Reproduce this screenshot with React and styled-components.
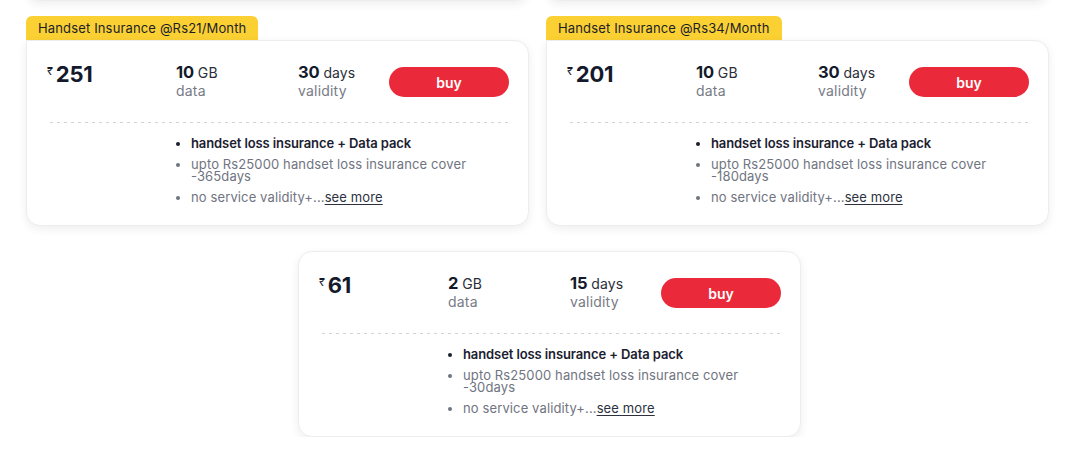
import React from "react";
import styled, { createGlobalStyle } from "styled-components";

const Global = createGlobalStyle`
  * { box-sizing: border-box; }
  html, body { margin: 0; padding: 0; background: #ffffff; overflow: hidden; }
  body { font-family: Inter, "Noto Sans", "Liberation Sans", sans-serif; color: #141a2b; }
`;

const Page = styled.div`
  width: 1069px;
  padding-left: 26px;
  margin-top: -184px;
`;

const Grid = styled.div`
  display: grid;
  grid-template-columns: 503px 503px;
  column-gap: 17px;
  row-gap: 15px;
`;

const ThirdRow = styled.div`
  display: flex;
  padding-left: 272px;
  margin-top: 25px;
`;

const Item = styled.div`
  display: flex;
  flex-direction: column;
  align-items: flex-start;
  width: 503px;
`;

const Badge = styled.div`
  height: 24px;
  padding: 0 12px;
  display: flex;
  align-items: center;
  background: #fbd033;
  border-radius: 6px 6px 0 0;
  font-size: 13px;
  color: #1b1f2a;
  letter-spacing: 0.15px;
`;

const Card = styled.div`
  width: 503px;
  background: #fff;
  border: 1px solid #ededed;
  border-radius: ${(p) => (p.$flat ? "0 14px 14px 14px" : "14px")};
  box-shadow: 0 3px 10px rgba(0, 0, 0, 0.07);
  padding: 22px 19px 22px 20px;
  height: ${(p) => (p.$h ? p.$h + "px" : "auto")};
`;

const Top = styled.div`
  display: grid;
  grid-template-columns: 129px 122px 1fr 120px;
  align-items: start;
`;

const Price = styled.div`
  display: flex;
  align-items: flex-start;
  height: 22px;
  font-size: 22px;
  line-height: 22px;
  font-weight: 700;
  color: #141a2b;
  letter-spacing: -0.2px;
`;

const Rupee = styled.span`
  font-size: 11px;
  line-height: 14px;
  font-weight: 400;
  margin-right: 3px;
  margin-top: 1px;
`;

const Stat = styled.div`
  display: flex;
  flex-direction: column;
`;

const Value = styled.div`
  height: 18px;
  font-size: 16.5px;
  line-height: 18px;
  font-weight: 700;
  color: #141a2b;
  letter-spacing: -0.2px;
`;

const Unit = styled.span`
  font-size: 14px;
  line-height: 1;
  font-weight: 400;
  color: #2a2f3a;
  margin-left: 4px;
  letter-spacing: 0.1px;
`;

const Label = styled.div`
  height: 18px;
  margin-top: 1px;
  font-size: 14px;
  line-height: 18px;
  color: #777b86;
  letter-spacing: 0.2px;
`;

const Buy = styled.button`
  margin-top: 4px;
  height: 30px;
  width: 120px;
  border: none;
  border-radius: 15px;
  background: #ea2a3b;
  color: #fff;
  font-family: inherit;
  font-size: 14px;
  font-weight: 600;
  cursor: pointer;
`;

const Divider = styled.div`
  margin: 22px 0 0 3px;
  height: 1px;
  background-image: linear-gradient(to right, #d3d3d3 50%, transparent 50%);
  background-size: 7px 1px;
`;

const Body = styled.div`
  display: grid;
  grid-template-columns: 129px 1fr;
  margin-top: 14px;
`;

const List = styled.ul`
  grid-column: 2;
  margin: 0;
  padding: 0 0 0 15px;
  display: flex;
  flex-direction: column;
  gap: 9px;
`;

const Li = styled.li`
  font-size: 13px;
  line-height: 12px;
  font-weight: ${(p) => (p.$strong ? 600 : 400)};
  color: ${(p) => (p.$strong ? "#1b2030" : "#70747f")};
  letter-spacing: ${(p) => (p.$strong ? "-0.1px" : "0.12px")};
  &::marker { color: ${(p) => (p.$strong ? "#1b2030" : "#70747f")}; font-size: 12px; }
`;

const More = styled.a`
  color: #2c313d;
  text-decoration: underline;
  text-underline-offset: 2px;
  cursor: pointer;
`;

const PlanCard = ({ price, gb, days, cover, flat }) => (
  <Card $flat={flat}>
    <Top>
      <Price>
        <Rupee>₹</Rupee>
        {price}
      </Price>
      <Stat>
        <Value>
          {gb}
          <Unit>GB</Unit>
        </Value>
        <Label>data</Label>
      </Stat>
      <Stat>
        <Value>
          {days}
          <Unit>days</Unit>
        </Value>
        <Label>validity</Label>
      </Stat>
      <Buy>buy</Buy>
    </Top>
    <Divider />
    <Body>
      <List>
        <Li $strong>handset loss insurance + Data pack</Li>
        <Li>upto Rs25000 handset loss insurance cover -{cover}days</Li>
        <Li>
          no service validity+...<More>see more</More>
        </Li>
      </List>
    </Body>
  </Card>
);

const plans = [
  { badge: "Handset Insurance @Rs21/Month", price: 251, gb: 10, days: 30, cover: 365 },
  { badge: "Handset Insurance @Rs34/Month", price: 201, gb: 10, days: 30, cover: 180 },
];

export default function App() {
  return (
    <>
      <Global />
      <Page>
        <Grid>
          <Item>
            <Card $h={185} />
          </Item>
          <Item>
            <Card $h={185} />
          </Item>
          {plans.map((p) => (
            <Item key={p.badge}>
              <Badge>{p.badge}</Badge>
              <PlanCard {...p} flat />
            </Item>
          ))}
        </Grid>
        <ThirdRow>
          <PlanCard price={61} gb={2} days={15} cover={30} />
        </ThirdRow>
      </Page>
    </>
  );
}
